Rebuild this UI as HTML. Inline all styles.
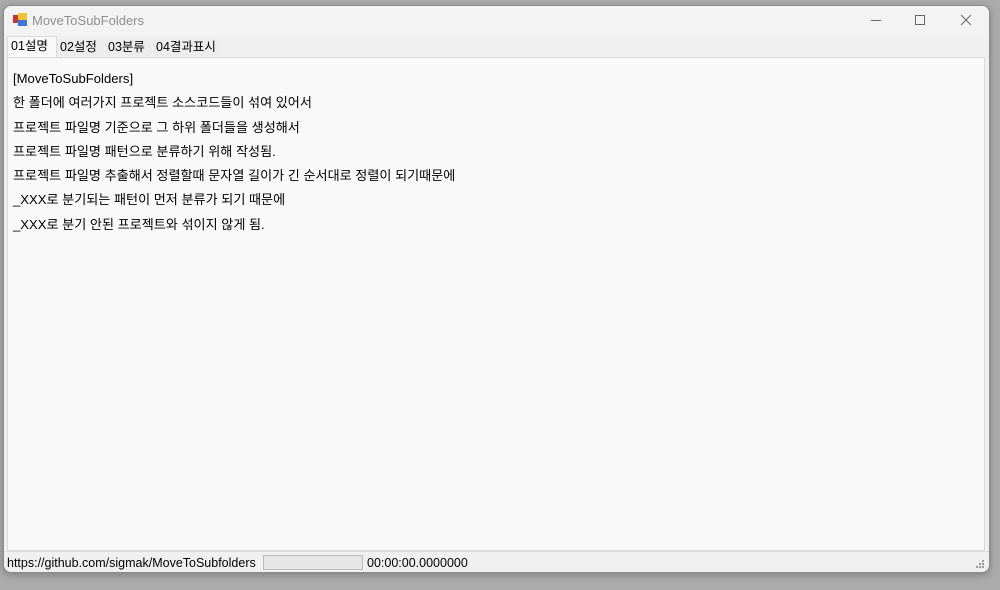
<!DOCTYPE html>
<html><head><meta charset="utf-8"><style>
*{margin:0;padding:0;box-sizing:border-box}
body{width:1000px;height:590px;background:#ababab;position:relative;overflow:hidden;font-family:"Liberation Sans","Noto Sans CJK KR",sans-serif}
.win{position:absolute;left:3px;top:5px;width:987px;height:568px;background:#f0f0f0;border:1px solid #8a8a8a;border-radius:8px;overflow:hidden;box-shadow:0 2px 8px rgba(0,0,0,.25)}
.title{position:absolute;left:0;top:0;width:100%;height:30px;background:#f3f3f3}
.title .t{position:absolute;left:28px;top:7px;font-size:13px;color:#8f8f8f}
.tabs{position:absolute;top:30px;left:0;width:100%;height:21px}
.tab{position:absolute;top:3px;height:17px;font-size:12.5px;color:#000;padding-left:3px;line-height:16px}
.tab.a{top:0;height:21px;background:#f9f9f9;border:1px solid #dadada;border-bottom:none;line-height:18px;left:3px;width:50px}
.panel{position:absolute;left:3px;top:51px;width:978px;height:494px;background:#f9f9f9;border:1px solid #dadada}
.panel p{font-size:13.1px;color:#000;height:24.3px;line-height:24px;padding-left:5px}
.status{position:absolute;left:0;top:545px;width:100%;height:22px;border-top:1px solid #dcdcdc;font-size:12.5px;color:#000}
</style></head><body>
<div class="win">
 <div class="title">
  <svg style="position:absolute;left:9px;top:7px" width="14" height="14"><rect x="0" y="2" width="6" height="8" fill="#c33"/><rect x="5" y="0" width="9" height="8" fill="#f1c232"/><rect x="5" y="7" width="9" height="6" fill="#3d78d8"/></svg>
  <div class="t">MoveToSubFolders</div>
  <div style="position:absolute;left:867px;top:14px;width:10px;height:1px;background:#666"></div>
  <div style="position:absolute;left:911px;top:9px;width:10px;height:10px;border:1px solid #666"></div>
  <svg style="position:absolute;left:956px;top:8px" width="12" height="12"><path d="M1 1L11 11M11 1L1 11" stroke="#666" stroke-width="1"/></svg>
 </div>
 <div class="tabs">
  <div class="tab a">01설명</div>
  <div class="tab" style="left:53px;width:47px;background:#ececec">02설정</div>
  <div class="tab" style="left:101px;width:47px;background:#ececec">03분류</div>
  <div class="tab" style="left:149px;width:67px;background:#ececec">04결과표시</div>
 </div>
 <div class="panel"><div style="height:9px"></div>
  <p>[MoveToSubFolders]</p>
  <p>한 폴더에 여러가지 프로젝트 소스코드들이 섞여 있어서</p>
  <p>프로젝트 파일명 기준으로 그 하위 폴더들을 생성해서</p>
  <p>프로젝트 파일명 패턴으로 분류하기 위해 작성됨.</p>
  <p>프로젝트 파일명 추출해서 정렬할때 문자열 길이가 긴 순서대로 정렬이 되기때문에</p>
  <p>_XXX로 분기되는 패턴이 먼저 분류가 되기 때문에</p>
  <p>_XXX로 분기 안된 프로젝트와 섞이지 않게 됨.</p>
 </div>
 <div class="status">
  <span style="position:absolute;left:3px;top:4px">https://github.com/sigmak/MoveToSubfolders</span>
  <div style="position:absolute;left:259px;top:3px;width:100px;height:15px;border:1px solid #bcbcbc;background:#e6e6e6"></div>
  <span style="position:absolute;left:363px;top:4px">00:00:00.0000000</span>
  <svg style="position:absolute;left:971px;top:8px" width="10" height="10" fill="#999"><rect x="7" y="0" width="2" height="2"/><rect x="4" y="3" width="2" height="2"/><rect x="7" y="3" width="2" height="2"/><rect x="1" y="6" width="2" height="2"/><rect x="4" y="6" width="2" height="2"/><rect x="7" y="6" width="2" height="2"/></svg>
 </div>
</div>
</body></html>
